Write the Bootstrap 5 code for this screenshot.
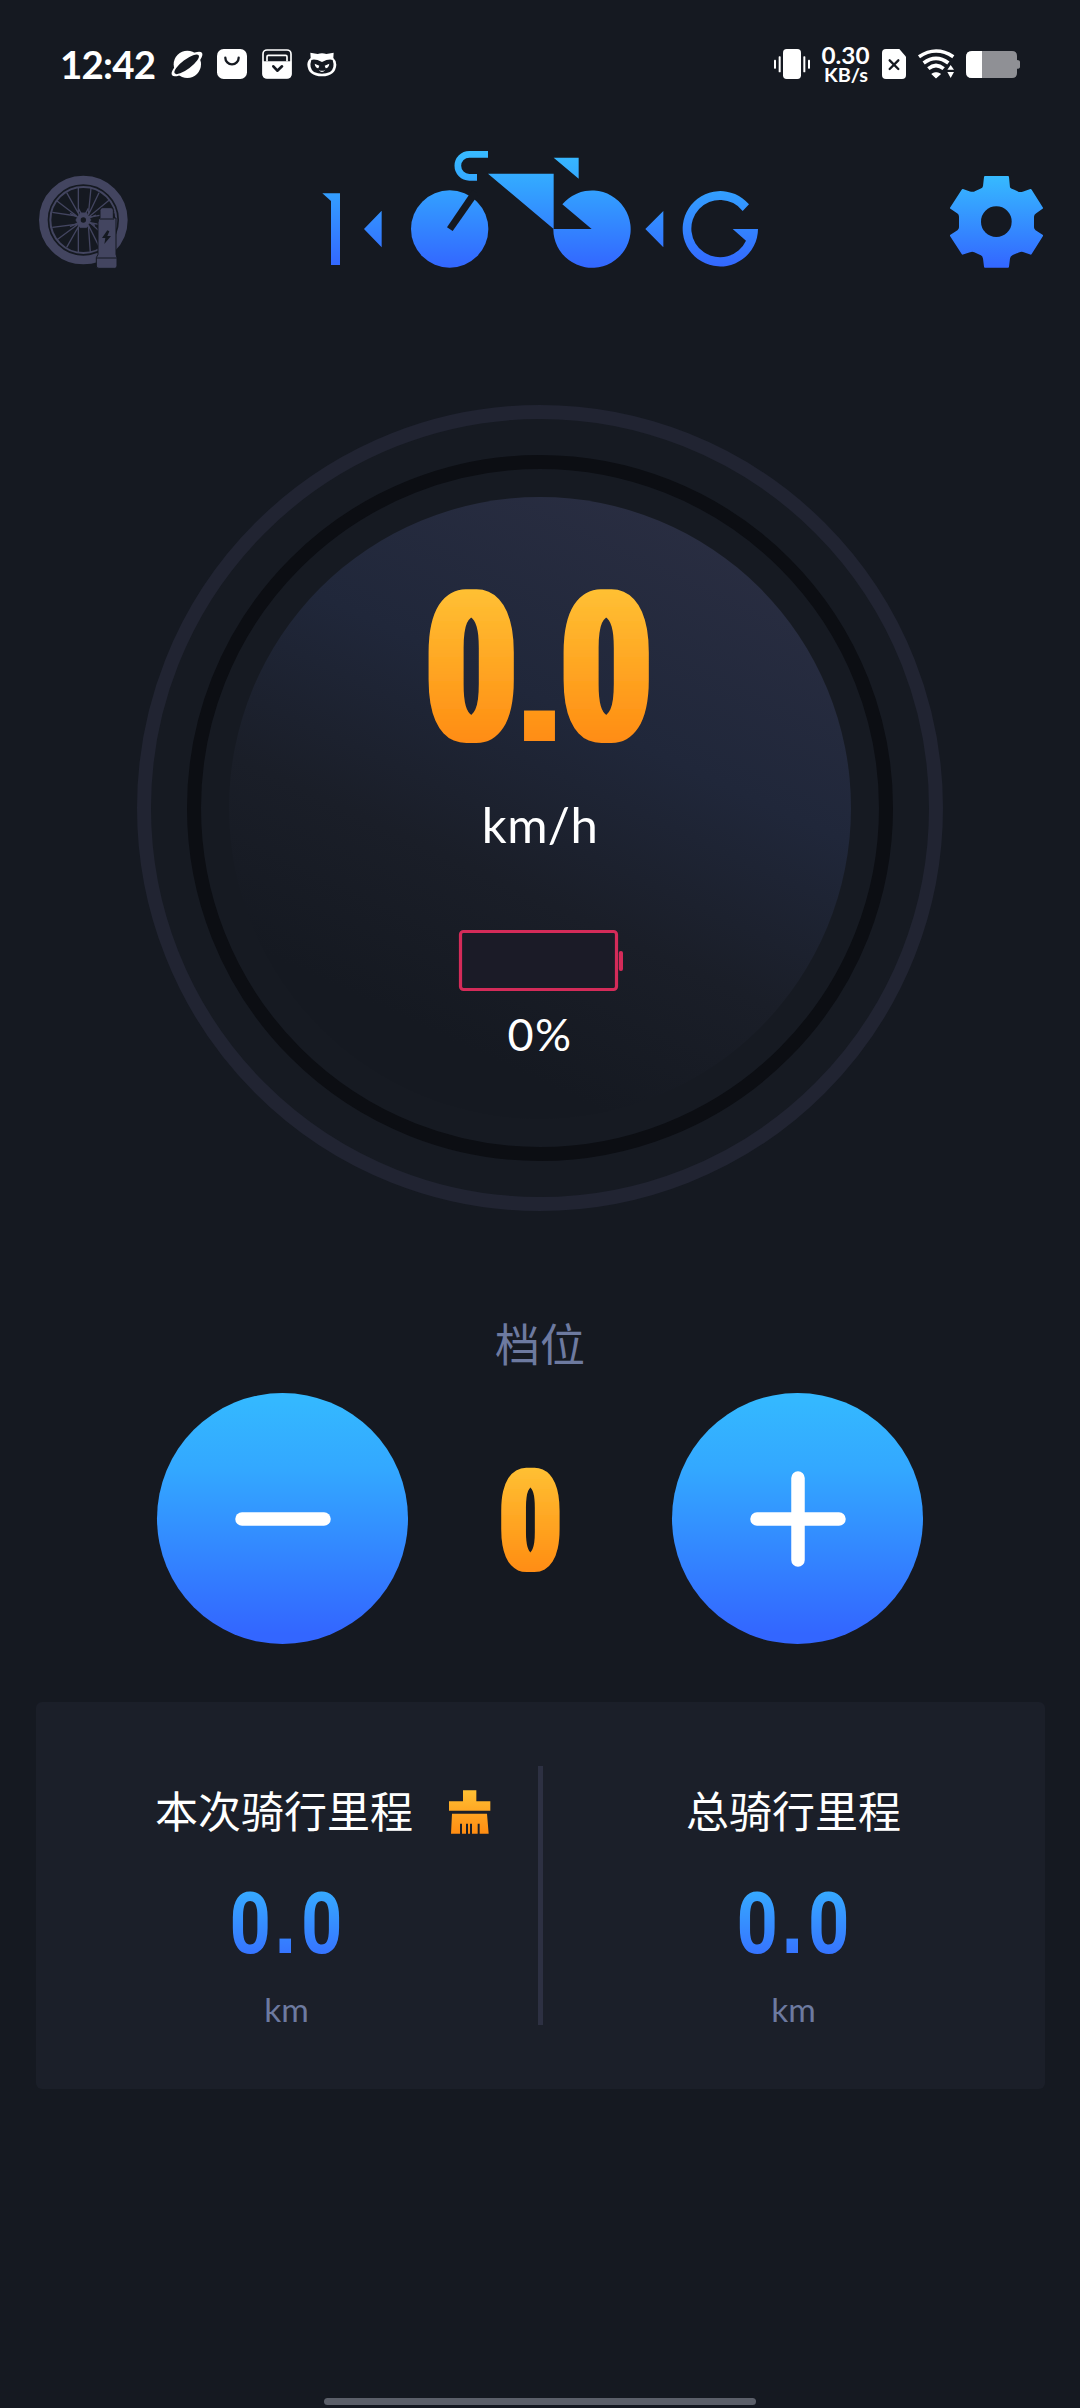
<!DOCTYPE html>
<html lang="zh-CN">
<head>
<meta charset="utf-8">
<meta name="viewport" content="width=device-width, initial-scale=1">
<title>骑行</title>
<link rel="stylesheet" href="https://cdn.jsdelivr.net/npm/bootstrap@5.3.0/dist/css/bootstrap.min.css">
<style>
:root{--ink:#151921;--muted:#6d7aa0}
body{background:var(--ink);color:#fff;font-family:Lato,"Noto Sans CJK SC",sans-serif;width:1080px;height:2408px;overflow:hidden}
svg{display:block;flex:none;overflow:visible}
.status{height:128px;padding:0 60px}
.clock{font-size:38.5px;font-weight:700;line-height:1;width:97px;letter-spacing:-.8px}
.ico-gap{gap:15px}
.topbar{height:140px;margin-top:12px;padding:0 20px}
.top-icon{margin-top:20px}
.dial{width:806px;height:806px;margin:125px auto 0;border:14.5px solid #212432;background:#161a22;padding:36px}
.dial-ring{border:14px solid #0c0e13;background:#161a22;padding:28px}
.dial-face{background:linear-gradient(205deg,#2a2e42 8%,#20273a 38%,#1a1e28 60%,#151921 80%)}
.speed-num{margin-top:62px}
.unit{font-size:49px;line-height:50px;margin-top:30px;letter-spacing:.4px}
.cell-icon{margin-top:80px}
.pct{font-size:45px;line-height:50px;margin-top:16px;letter-spacing:1.5px}
.gear-title{font-size:45px;line-height:60px;color:var(--muted);margin-top:104px}
.gear-row{margin-top:18px;padding:0 157px;height:251px}
.round-btn{width:251px;height:251px;border:0;background:linear-gradient(#34b8ff 3%,#33a8ff 30%,#3366ff 96%)}
.gear-num{margin-left:-19px}
.trip{width:1009px;height:387px;margin:58px auto 0;background:#1b1f29;border-radius:6px}
.trip-half{width:50%;padding-top:80px}
.trip-title{font-size:43px;line-height:60px}
.trip-first{margin-left:74px;gap:35px}
.trip-num{margin-top:38px}
.trip-unit{font-size:33.5px;line-height:40px;color:var(--muted);margin-top:25px}
.divider{width:5px;height:259px;background:#2d3042}
.home-bar{width:432px;height:7px;background:#5b5f69;margin-bottom:3px}
</style>
</head>
<body class="d-flex flex-column">
<header class="status d-flex justify-content-between align-items-center">
  <div class="d-flex align-items-center ico-gap">
    <span class="clock">12:42</span>
    <svg width="30" height="30" viewBox="396 57 90 90"><circle cx="442" cy="103" r="41" fill="#fff"/><ellipse cx="441" cy="102" rx="56" ry="19" transform="rotate(-37 441 102)" fill="#fff"/><ellipse cx="440" cy="103" rx="45" ry="14" transform="rotate(-37 440 103)" fill="#151921"/></svg>
    <svg width="30" height="30" viewBox="531 57 90 90"><rect x="531" y="57" width="90" height="90" rx="20" fill="#fff"/><path d="M556 83a20 20 0 0 0 40 0" fill="none" stroke="#151921" stroke-width="7" stroke-linecap="round"/></svg>
    <svg width="30" height="30" viewBox="666 57 90 90"><rect x="669" y="60" width="84" height="84" rx="12" fill="none" stroke="#fff" stroke-width="5"/><path d="M668 94H754V132Q754 145 741 145H681Q668 145 668 132Z" fill="#fff"/><path d="M681 94V80Q681 76 685 76H737Q741 76 741 80V94" fill="none" stroke="#fff" stroke-width="5"/><path d="M700 109L712 122L726 109" fill="none" stroke="#151921" stroke-width="8" stroke-linecap="round" stroke-linejoin="round"/></svg>
    <svg width="30" height="30" viewBox="801 57 90 90"><path d="M811 68L833 72Q846 68 859 72L881 68L880 84Q889 92 889 104Q887 138 846 139Q804 138 802 104Q802 92 812 84Z" fill="#fff"/><path d="M814 90Q826 86 846 96Q866 86 878 90Q886 114 870 126Q846 136 822 126Q806 114 814 90Z" fill="#151921"/><path d="M824 101L838 107L835 115Q826 114 824 101ZM868 101L854 107L857 115Q866 114 868 101ZM836 119Q846 126 856 119Q846 133 836 119Z" fill="#fff"/></svg>
  </div>
  <div class="d-flex align-items-center">
    <svg width="36" height="30" viewBox="72 57 108 90" fill="#fff"><rect x="99" y="57" width="54" height="90" rx="11"/><rect x="86" y="79" width="6" height="48" rx="2"/><rect x="72" y="89" width="6" height="27" rx="2"/><rect x="160" y="79" width="6" height="48" rx="2"/><rect x="174" y="89" width="6" height="27" rx="2"/></svg>
    <svg class="ms-2" width="54" height="40" viewBox="818 43 54 40" fill="#fff" font-weight="700"><text x="821.500" y="63" font-size="23.500" textLength="48" lengthAdjust="spacingAndGlyphs">0.30</text><text x="824" y="80.500" font-size="18.500" textLength="44" lengthAdjust="spacingAndGlyphs">KB/s</text></svg>
    <svg style="margin-left:10px" width="24" height="30" viewBox="396 57 72 90"><path d="M408 57H448L468 80V135Q468 147 456 147H408Q396 147 396 135V69Q396 57 408 57Z" fill="#fff"/><path d="M419 91L445 117M445 91L419 117" stroke="#151921" stroke-width="7" stroke-linecap="round"/></svg>
    <svg style="margin-left:12px" width="38" height="30" viewBox="504 59 114 90" fill="none" stroke="#fff" stroke-width="11"><path d="M507 82Q558 48 610 82M521 101Q558 73 595 101"/><path d="M535 118Q558 99 581 118"/><path d="M547 134Q558 127 570 134L558 145Z" fill="#fff" stroke-width="4"/><path d="M602 107L612 121H592ZM602 146L612 128H592Z" fill="#fff" stroke="#151921" stroke-width="3" paint-order="stroke"/></svg>
    <svg style="margin-left:10px" width="54" height="27" viewBox="648 66 162 81"><path d="M666 66H786Q801 66 801 81V93Q810 93 810 99V113Q810 119 801 119V132Q801 147 786 147H666Q648 147 648 129V84Q648 66 666 66Z" fill="#8f9095"/><path d="M696 66H666Q648 66 648 84V129Q648 147 666 147H696Z" fill="#fff"/></svg>
  </div>
</header>

<nav class="topbar d-flex justify-content-between">
  <svg class="top-icon" width="130" height="120" viewBox="0 0 390 360" fill="none" stroke="#434560">
    <circle cx="190" cy="180" r="120" stroke-width="26"/><circle cx="190" cy="180" r="99" stroke-width="6"/>
    <g stroke-width="4"><path d="M175 82V160L140 98M213 84L205 165L237 98M268 120L205 172L284 158M282 202L210 188L268 240M240 265L205 195L211 278M175 278V200L140 262M110 240L175 192L97 202M97 157L170 168L110 122"/><path d="M175 145L204 200M205 145L176 200M150 160L225 196M150 200L228 165"/></g>
    <path d="M180 158H200L213 180L200 203H180L167 180Z" fill="#434560"/><circle cx="190" cy="180" r="8" fill="#151921" stroke="none"/>
    <g fill="#434560" stroke="#151921" stroke-width="3"><path d="M248 143H273Q280 143 280 151V174H288V283L291 293V318Q291 325 284 325H237Q229 325 229 318V293L234 283V188Q234 178 240 174V151Q240 143 248 143Z"/><path d="M240 177H282M230 294H290"/></g>
    <path d="M262 211L246 234H256L253 252L273 228H262L268 214Z" fill="#151921" stroke="none"/>
  </svg>
  <svg width="460" height="140" viewBox="0 0 1380 420" fill="url(#brand)">
    <defs><linearGradient id="brand" gradientUnits="userSpaceOnUse" x1="0" y1="30" x2="0" y2="385"><stop offset="0" stop-color="#38bcff"/><stop offset=".3" stop-color="#33a4ff"/><stop offset="1" stop-color="#3366ff"/></linearGradient></defs>
    <path d="M37 160H90V375H63V183ZM162 267L215 212V322Z"/>
    <circle cx="419" cy="267" r="116"/><path d="M411 262L428 273L506 162L487 150Z" fill="#151921"/>
    <path d="M534 43H478A34.500 34.500 0 0 0 478 112H501" fill="none" stroke="url(#brand)" stroke-width="20"/>
    <path d="M534 101H731V267ZM731 53H806V116ZM845 267L757 193A116 116 0 1 1 730 267ZM1006 267L1060 213V322Z"/>
    <path d="M1317 193A113 113 0 1 0 1344 267H1268L1308 302A86 86 0 1 1 1298 213Z"/>
  </svg>
  <svg class="top-icon" width="130" height="120" viewBox="0 0 390 360">
    <defs><linearGradient id="cog" gradientUnits="userSpaceOnUse" x1="0" y1="48" x2="0" y2="323"><stop offset="0" stop-color="#36baff"/><stop offset="1" stop-color="#3366ff"/></linearGradient></defs>
    <path d="M165 51H234L237 83Q240 88 250 91L264 98Q272 101 281 97L302 90L336 144L317 157Q309 162 309 170V202Q309 209 315 213L336 227L302 281L280 273Q272 271 265 275L247 282Q238 286 237 295L234 320H165L162 295Q161 287 152 282L134 274Q126 271 119 274L98 281L63 227L84 213Q90 209 90 202V170Q90 162 84 158L63 144L98 90L119 97Q126 100 134 97L152 89Q161 86 162 78Z" fill="url(#cog)" stroke="url(#cog)" stroke-width="6" stroke-linejoin="round"/>
    <circle cx="199" cy="185" r="46" fill="#151921"/>
  </svg>
</nav>

<main class="flex-grow-1">
  <section class="dial rounded-circle">
    <div class="dial-ring rounded-circle w-100 h-100">
      <div class="dial-face rounded-circle w-100 h-100 d-flex flex-column align-items-center">
        <svg class="speed-num" width="280" height="210" viewBox="400 560 280 210" font-family="Roboto" font-weight="900">
          <defs>
            <linearGradient id="amber" gradientUnits="userSpaceOnUse" x1="0" y1="-152" x2="0" y2="2"><stop offset="0" stop-color="#ffc033"/><stop offset="1" stop-color="#ff8c12"/></linearGradient>
            <filter id="widen"><feMorphology operator="dilate" radius="5 0"/></filter>
          </defs>
          <g filter="url(#widen)"><text transform="translate(427.300 741.500) scale(.722 1)" font-size="210" fill="url(#amber)"><tspan x="0">0</tspan><tspan x="127" font-family="Liberation Sans" font-weight="700" font-size="205">.</tspan><tspan x="187">0</tspan></text></g>
        </svg>
        <div class="unit">km/h</div>
        <svg class="cell-icon" width="168" height="64" viewBox="456 929 168 64"><rect x="460.500" y="931.500" width="156" height="58" rx="3" fill="#1b1b27" stroke="#d42b59" stroke-width="3.200"/><rect x="618.800" y="951" width="4.200" height="20" rx="2" fill="#d42b59"/></svg>
        <div class="pct">0%</div>
      </div>
    </div>
  </section>

  <div class="gear-title text-center">档位</div>
  <section class="gear-row d-flex justify-content-between align-items-center">
    <button class="round-btn rounded-circle p-0 d-flex align-items-center justify-content-center" aria-label="减"><svg width="96" height="96" viewBox="0 0 96 96" stroke="#fff" stroke-width="13.500" stroke-linecap="round"><path d="M7 48H89"/></svg></button>
    <svg class="gear-num" width="100" height="180" viewBox="481 1428.500 100 180" font-family="Roboto" font-weight="900">
      <defs><linearGradient id="amber2" gradientUnits="userSpaceOnUse" x1="0" y1="-104" x2="0" y2="2"><stop offset="0" stop-color="#ffc033"/><stop offset="1" stop-color="#ff8c12"/></linearGradient>
      <filter id="widen2"><feMorphology operator="dilate" radius="4 0"/></filter></defs>
      <g filter="url(#widen2)"><text transform="translate(501 1570.500) scale(.71 1)" font-size="143" fill="url(#amber2)">0</text></g>
    </svg>
    <button class="round-btn rounded-circle p-0 d-flex align-items-center justify-content-center" aria-label="加"><svg width="96" height="96" viewBox="0 0 96 96" stroke="#fff" stroke-width="13.500" stroke-linecap="round"><path d="M7 48H89M48 7V89"/></svg></button>
  </section>

  <section class="trip d-flex">
    <div class="trip-half d-flex flex-column align-items-center">
      <div class="trip-title trip-first d-flex align-items-center">本次骑行里程
        <svg width="44" height="46" viewBox="0 0 132 138"><defs><linearGradient id="broom" x1="0" y1="0" x2="0" y2="1"><stop offset="0" stop-color="#ffc033"/><stop offset="1" stop-color="#ff8c12"/></linearGradient></defs><path d="M45 4H85V37H127V65H3V37H45ZM12 74H117L122 134H95V104H89V134H72V104H66V134H60V104H54V134H42V104H36V134H9Z" fill="url(#broom)"/></svg>
      </div>
      <svg class="trip-num" width="140" height="84" viewBox="216 1880 140 84" font-family="Roboto" font-weight="700"><defs><linearGradient id="azure" gradientUnits="userSpaceOnUse" x1="0" y1="-62" x2="0" y2="1"><stop offset="0" stop-color="#36aaff"/><stop offset="1" stop-color="#3674ff"/></linearGradient></defs><text transform="translate(228.500 1952.500) scale(.84 1)" font-size="86" fill="url(#azure)"><tspan x="0">0</tspan><tspan x="53" font-family="Liberation Sans" font-size="97">.</tspan><tspan x="85">0</tspan></text></svg>
      <div class="trip-unit">km</div>
    </div>
    <div class="divider flex-shrink-0 align-self-center"></div>
    <div class="trip-half d-flex flex-column align-items-center">
      <div class="trip-title">总骑行里程</div>
      <svg class="trip-num" width="140" height="84" viewBox="216 1880 140 84" font-family="Roboto" font-weight="700"><text transform="translate(228.500 1952.500) scale(.84 1)" font-size="86" fill="url(#azure)"><tspan x="0">0</tspan><tspan x="53" font-family="Liberation Sans" font-size="97">.</tspan><tspan x="85">0</tspan></text></svg>
      <div class="trip-unit">km</div>
    </div>
  </section>
</main>
<footer class="home-bar rounded-pill mx-auto flex-shrink-0"></footer>
<script src="https://cdn.jsdelivr.net/npm/bootstrap@5.3.0/dist/js/bootstrap.bundle.min.js"></script>
</body>
</html>
